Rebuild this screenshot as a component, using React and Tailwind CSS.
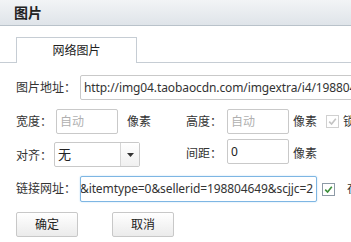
import React from "react";

const font = { fontFamily: '"Noto Sans", "Noto Sans CJK SC", sans-serif' };

const Check = ({ disabled }) => (
  <div
    className={`w-[13px] h-[13px] shrink-0 border flex items-center justify-center bg-white ${
      disabled ? "border-[#d0d0d0]" : "border-[#8d9aa6]"
    }`}
  >
    <svg width="9" height="9" viewBox="0 0 9 9">
      <path
        d="M1.2 4.6 L3.6 7 L7.8 1.8"
        fill="none"
        stroke={disabled ? "#c4c4c4" : "#3d8f3a"}
        strokeWidth="1.6"
      />
    </svg>
  </div>
);

const Box = ({ className = "", children }) => (
  <div
    className={`h-[25px] shrink-0 border border-[#c9c9c9] rounded-[2px] bg-white flex items-center px-[3px] overflow-hidden whitespace-nowrap ${className}`}
  >
    {children}
  </div>
);

const Label = ({ className = "", children }) => (
  <span className={`shrink-0 whitespace-nowrap ${className}`}>{children}</span>
);

const Button = ({ children }) => (
  <div className="w-[62px] h-[25px] shrink-0 border border-[#c8c8c8] rounded-[2px] bg-gradient-to-b from-white to-[#ebebeb] flex items-center justify-center text-[12px] text-[#222]">
    {children}
  </div>
);

const App = () => {
  return (
    <div className="w-[351px] h-[242px] overflow-hidden bg-white text-[#333]" style={font}>
      <div className="h-[26px] bg-gradient-to-b from-[#f2f4f6] to-[#dfe4e9] border-b border-[#b9c2ca] pl-[14px] flex items-center">
        <span className="text-[14px] font-bold text-[#222]">图片</span>
      </div>

      <div className="flex mt-[11px] h-[26px]">
        <div className="w-[16px] border-b border-[#c6cdd4]"></div>
        <div className="w-[121px] border border-b-0 border-[#c6cdd4] flex items-center justify-center text-[12px] text-[#222]">
          网络图片
        </div>
        <div className="flex-1 border-b border-[#c6cdd4]"></div>
      </div>

      <div className="pl-[16px] text-[12px]">
        <div className="flex items-center mt-[12px] w-[400px]">
          <Label className="w-[64px]">图片地址：</Label>
          <Box className="w-[300px] tracking-[-0.1px]">
            http://img04.taobaocdn.com/imgextra/i4/198804649/T2xxXXXX
          </Box>
        </div>

        <div className="flex items-center mt-[9px] w-[400px]">
          <Label className="w-[40px]">宽度：</Label>
          <Box className="w-[62px] text-[#b0b0b0]">自动</Box>
          <Label className="ml-[9px]">像素</Label>
          <Label className="ml-[35px] w-[41px]">高度：</Label>
          <Box className="w-[62px] text-[#b0b0b0]">自动</Box>
          <Label className="ml-[4px]">像素</Label>
          <div className="ml-[9px]">
            <Check disabled />
          </div>
          <Label className="ml-[4px]">锁定比例</Label>
        </div>

        <div className="flex items-start mt-[5px] w-[400px]">
          <Label className="w-[38px] mt-[8px]">对齐：</Label>
          <div className="mt-[3px] w-[86px] h-[25px] shrink-0 border border-[#c9c9c9] rounded-[2px] flex bg-white">
            <div className="flex-1 flex items-center pl-[3px] text-[13px] text-[#222]">无</div>
            <div className="w-[19px] border-l border-[#d6d6d6] bg-gradient-to-b from-white to-[#f0f0f0] flex items-center justify-center">
              <svg width="7" height="4" viewBox="0 0 7 4">
                <path d="M0 0 H7 L3.5 4 Z" fill="#333" />
              </svg>
            </div>
          </div>
          <Label className="ml-[46px] w-[41px] mt-[6px]">间距：</Label>
          <Box className="w-[62px] text-[#222]">0</Box>
          <Label className="ml-[4px] mt-[6px]">像素</Label>
        </div>

        <div className="flex items-center mt-[9px] w-[400px]">
          <Label className="w-[64px]">链接网址：</Label>
          <div className="w-[237px] h-[26px] shrink-0 border border-[#7eb6e3] rounded-[2px] shadow-[0_0_2px_#b9dcf5] bg-white flex items-center justify-end overflow-hidden whitespace-nowrap pr-[3px] tracking-[-0.1px]">
            http://item.taobao.com/item.htm?id=1&amp;itemtype=0&sellerid=198804649&scjjc=2
          </div>
          <div className="ml-[5px]">
            <Check />
          </div>
          <Label className="ml-[12px]">在新窗口打开</Label>
        </div>

        <div className="flex mt-[10px] gap-[34px]">
          <Button>确定</Button>
          <Button>取消</Button>
        </div>
      </div>
    </div>
  );
};

export default App;
